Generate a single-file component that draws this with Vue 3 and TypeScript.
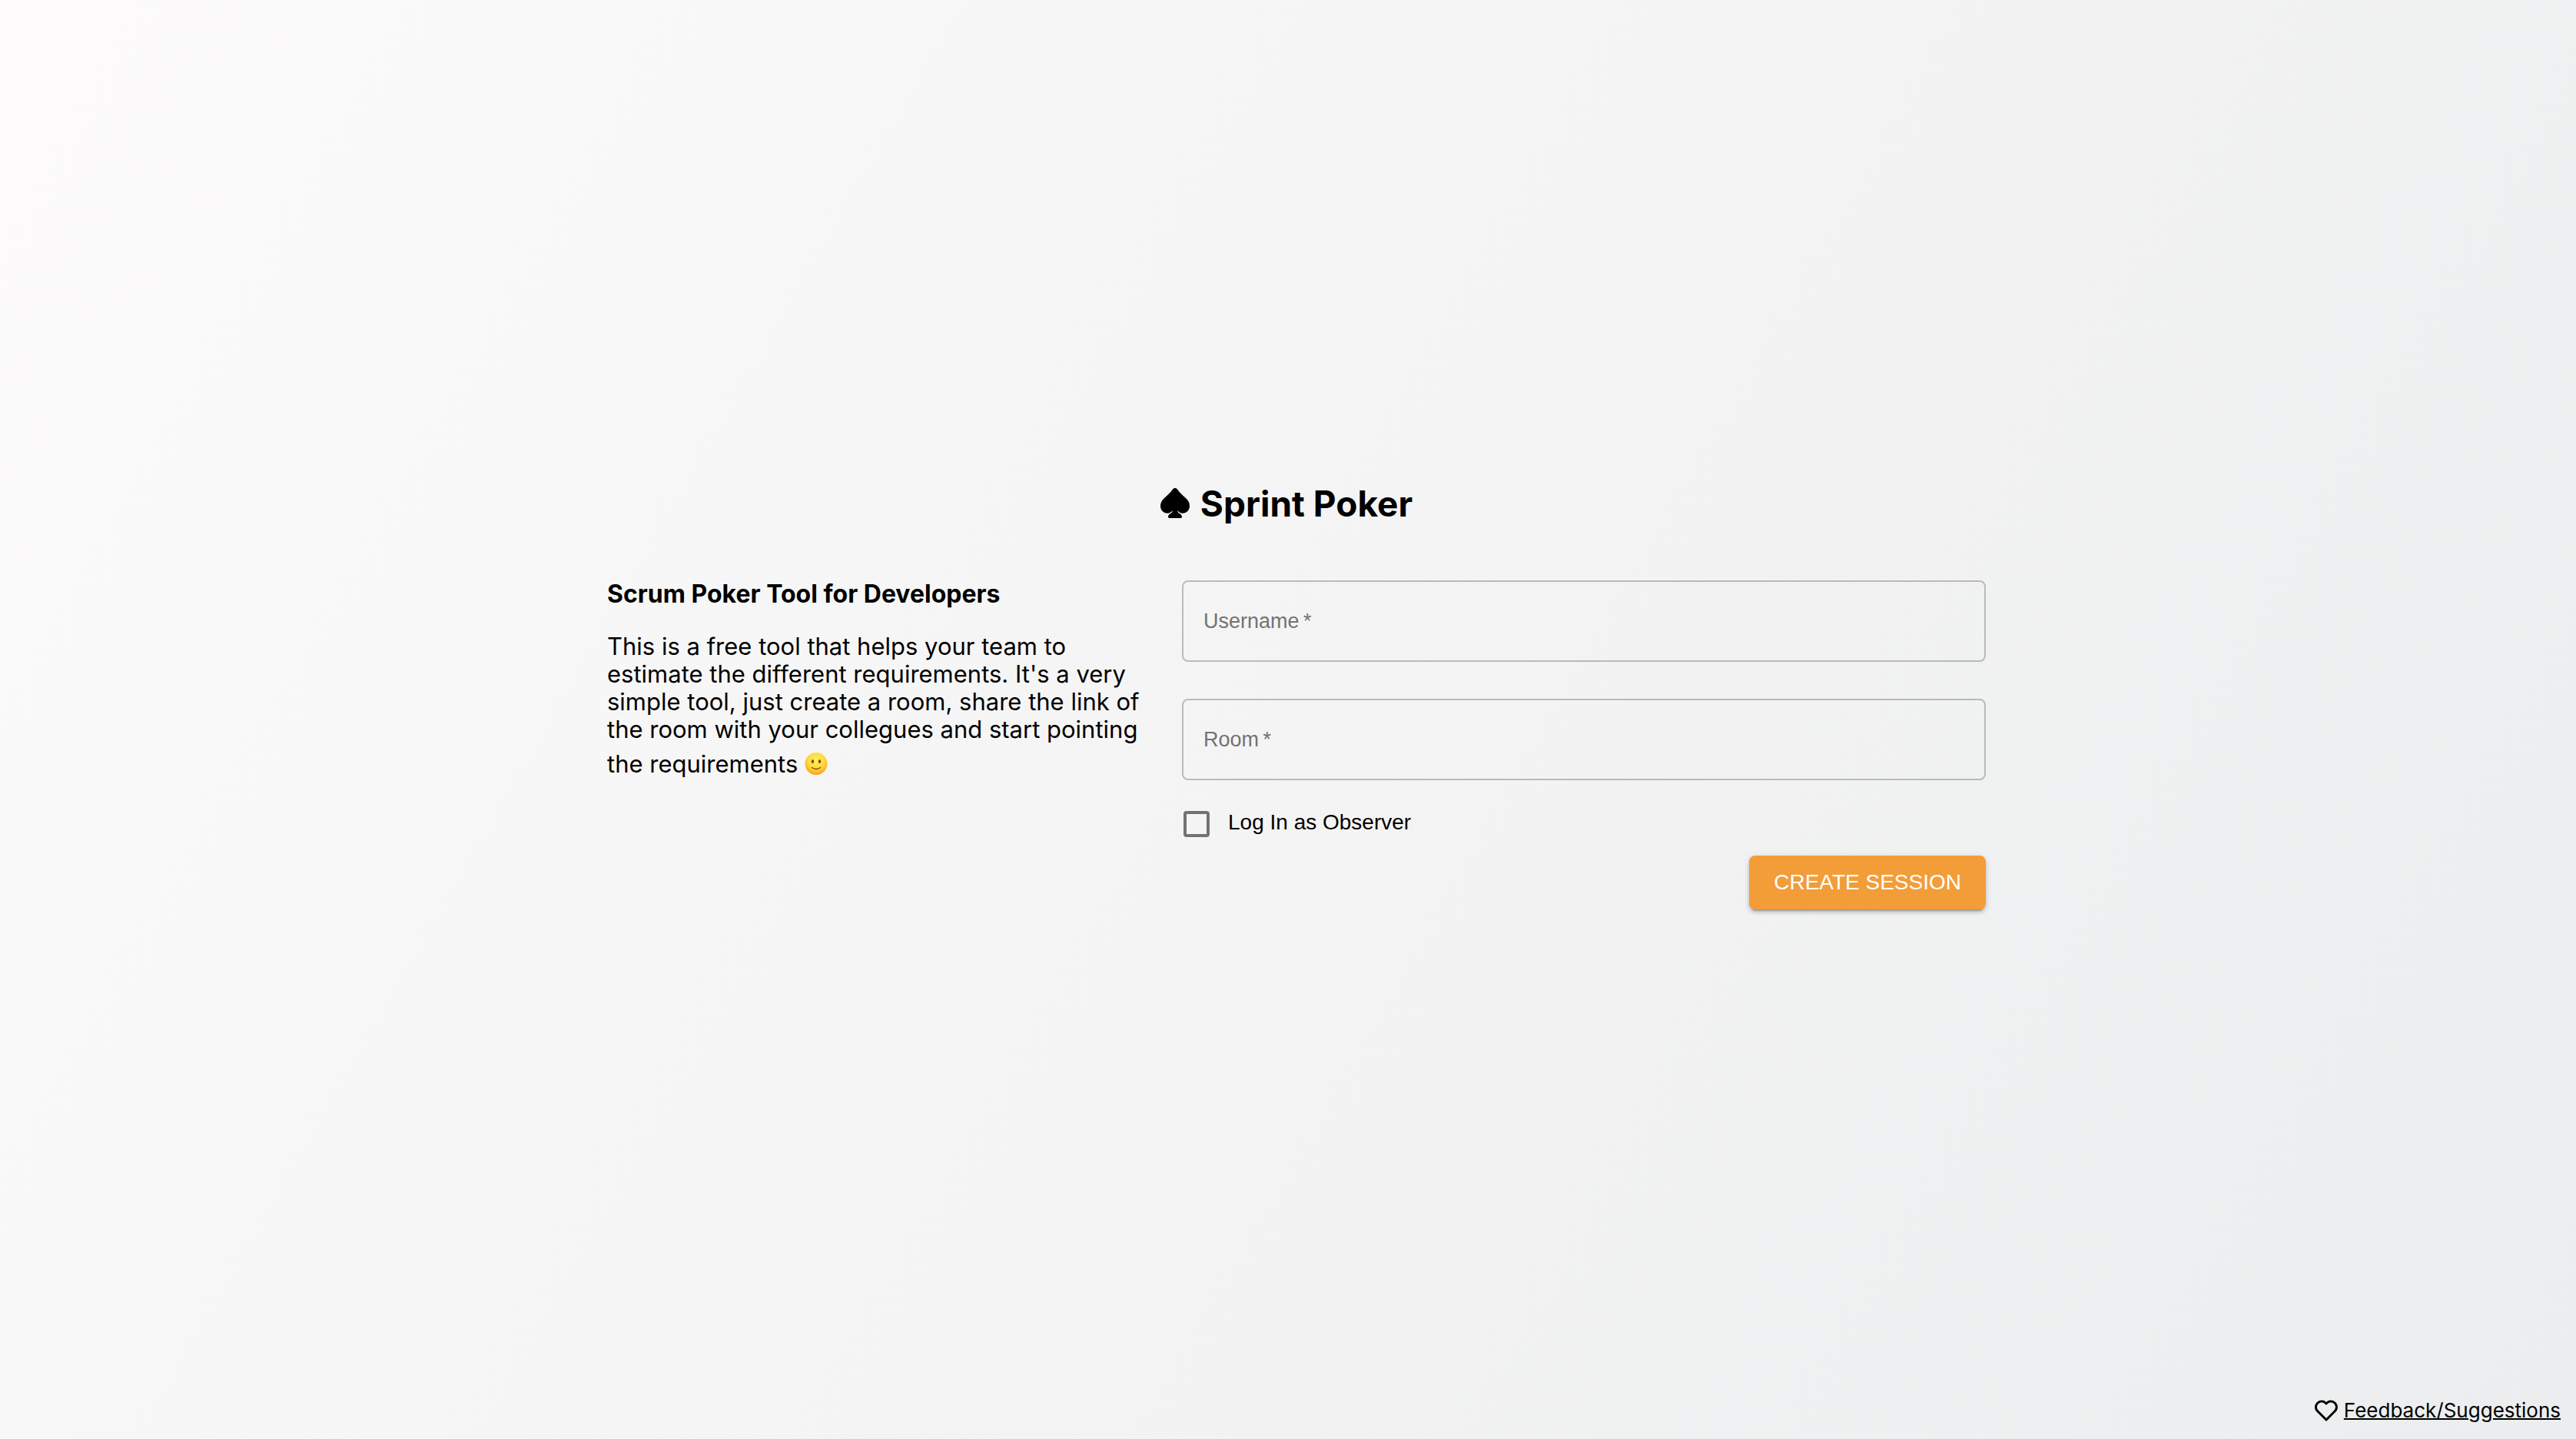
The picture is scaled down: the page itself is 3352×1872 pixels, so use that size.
<script setup lang="ts">
import { reactive } from 'vue'

const session = reactive({ username: '', room: '', observer: false })

function createSession(): void {
  session.username = session.username.trim()
  session.room = session.room.trim()
}
</script>

<template>
  <div class="page">
    <main class="content">
      <h1 class="title">
        <svg class="spade" viewBox="0 0 114 117" aria-hidden="true">
          <path d="M57 0C53 0 50 2 47 6C38 19 28 27 15 39C6 47 0 57 0 70C0 87 12 98 27 98C35 98 42 95 47 88C48 92 45 96 40 99C34 102 30 106 30 112C30 115 32 117 35 117H79C82 117 84 115 84 112C84 106 80 102 74 99C69 96 66 92 67 88C72 95 79 98 87 98C102 98 114 87 114 70C114 57 108 47 99 39C86 27 76 19 67 6C64 2 61 0 57 0Z" />
        </svg>
        <span>Sprint Poker</span>
      </h1>
      <div class="columns">
        <section class="intro">
          <h2>Scrum Poker Tool for Developers</h2>
          <p>
            This is a free tool that helps your team to estimate the different requirements. It's a very simple tool,
            just create a room, share the link of the room with your collegues and start pointing the requirements
            <svg class="smile" viewBox="0 0 30 46" role="img" aria-label="slightly smiling face">
              <defs>
                <radialGradient id="face" cx="50%" cy="36%" r="64%">
                  <stop offset="0" stop-color="#ffec62" />
                  <stop offset="0.55" stop-color="#ffdb3f" />
                  <stop offset="0.85" stop-color="#fcb828" />
                  <stop offset="1" stop-color="#f09a20" />
                </radialGradient>
              </defs>
              <circle cx="15" cy="26.5" r="14.5" fill="url(#face)" />
              <ellipse cx="10.5" cy="23.5" rx="1.6" ry="2.5" fill="#75430f" />
              <ellipse cx="19.5" cy="23.5" rx="1.6" ry="2.5" fill="#75430f" />
              <path d="M9.5 31.500Q15 35.500 20.500 31.500" fill="none" stroke="#75430f" stroke-width="1.300" stroke-linecap="round" />
            </svg>
          </p>
        </section>
        <form class="form" @submit.prevent="createSession">
          <div class="field">
            <input id="username" v-model="session.username" type="text" placeholder=" " required />
            <label for="username">Username&#8201;*</label>
          </div>
          <div class="field">
            <input id="room" v-model="session.room" type="text" placeholder=" " required />
            <label for="room">Room&#8201;*</label>
          </div>
          <label class="observer" for="observer">
            <input id="observer" v-model="session.observer" type="checkbox" />
            <span>Log In as Observer</span>
          </label>
          <button class="create" type="submit">CREATE SESSION</button>
        </form>
      </div>
    </main>
    <footer class="feedback">
      <svg class="heart" viewBox="0 0 24 24" aria-hidden="true">
        <path d="M12 4.595a5.904 5.904 0 0 0-3.996-1.558 5.942 5.942 0 0 0-4.213 1.758c-2.353 2.363-2.352 6.059.002 8.412l7.332 7.332c.17.299.498.492.875.492a.99.99 0 0 0 .792-.409l7.415-7.415c2.354-2.354 2.354-6.049-.002-8.416a5.938 5.938 0 0 0-4.209-1.754A5.906 5.906 0 0 0 12 4.595zm6.791 1.61c1.563 1.571 1.564 4.025.002 5.588L12 18.586l-6.793-6.793c-1.562-1.563-1.561-4.017-.002-5.584.76-.756 1.754-1.172 2.799-1.172s2.035.416 2.789 1.17l.5.5a.999.999 0 0 0 1.414 0l.5-.5c1.512-1.509 4.074-1.505 5.584-.002z" />
      </svg>
      <a href="#feedback">Feedback/Suggestions</a>
    </footer>
  </div>
</template>

<style>
body {
  margin: 0;
}
</style>

<style scoped>
.page {
  box-sizing: border-box;
  min-height: 100vh;
  display: flex;
  flex-direction: column;
  background: linear-gradient(120deg, #fdfbfb 0%, #ebedee 100%);
  color: #000;
  font-family: Inter, sans-serif;
}

.content {
  box-sizing: border-box;
  width: 100%;
  max-width: 1816px;
  margin: auto;
  padding-bottom: 12px;
}

.title {
  display: flex;
  align-items: center;
  justify-content: center;
  gap: 14px;
  margin: 0 4px 68px 0;
  font-size: 46px;
  line-height: 64px;
  font-weight: 700;
}

.spade {
  width: 38px;
  height: 39px;
}

.columns {
  display: grid;
  grid-template-columns: 700fr 1046fr;
  column-gap: 48px;
  padding-left: 22px;
}

.intro h2 {
  margin: 0 0 32px;
  font-size: 32px;
  line-height: 36px;
  font-weight: 700;
}

.intro p {
  margin: 0;
  font-size: 31px;
  line-height: 36px;
}

.smile {
  width: 30px;
  height: 46px;
  vertical-align: -8px;
}

.form {
  display: flex;
  flex-direction: column;
  font-family: "Liberation Sans", Arial, sans-serif;
}

.field {
  position: relative;
  margin-bottom: 48px;
}

.field + .field {
  margin-bottom: 36px;
}

.field input {
  display: block;
  box-sizing: border-box;
  width: 100%;
  height: 106px;
  padding: 0 26px;
  border: 2px solid rgba(0, 0, 0, 0.23);
  border-radius: 8px;
  outline: none;
  background: transparent;
  color: #000;
  font: inherit;
  font-size: 27px;
}

.field label {
  position: absolute;
  top: 0;
  left: 28px;
  line-height: 106px;
  font-size: 27px;
  color: #737373;
  pointer-events: none;
}

.field input:not(:placeholder-shown) + label {
  display: none;
}

.observer {
  display: flex;
  align-items: center;
  align-self: flex-start;
  gap: 24px;
  height: 42px;
  margin-bottom: 20px;
  padding-left: 2px;
  font-size: 28px;
}

.observer input {
  appearance: none;
  box-sizing: border-box;
  width: 34px;
  height: 34px;
  margin: 0;
  border: 4px solid #737373;
  border-radius: 4px;
}

.observer span {
  padding-bottom: 4px;
}

.observer input:checked {
  background: #f29d38;
}

.create {
  align-self: flex-end;
  height: 70px;
  padding: 0 32px;
  border: 0;
  border-radius: 8px;
  background: #f29d38;
  color: #fff;
  font: inherit;
  font-size: 28px;
  box-shadow: 0 6px 2px -4px rgba(0, 0, 0, 0.2), 0 4px 4px rgba(0, 0, 0, 0.14), 0 2px 10px rgba(0, 0, 0, 0.12);
}

.feedback {
  display: flex;
  align-items: center;
  justify-content: flex-end;
  gap: 5px;
  height: 36px;
  padding: 0 20px 19px;
}

.heart {
  width: 36px;
  height: 36px;
}

.feedback a {
  color: #000;
  font-size: 26px;
  line-height: 36px;
  text-decoration-thickness: 2px;
}
</style>
